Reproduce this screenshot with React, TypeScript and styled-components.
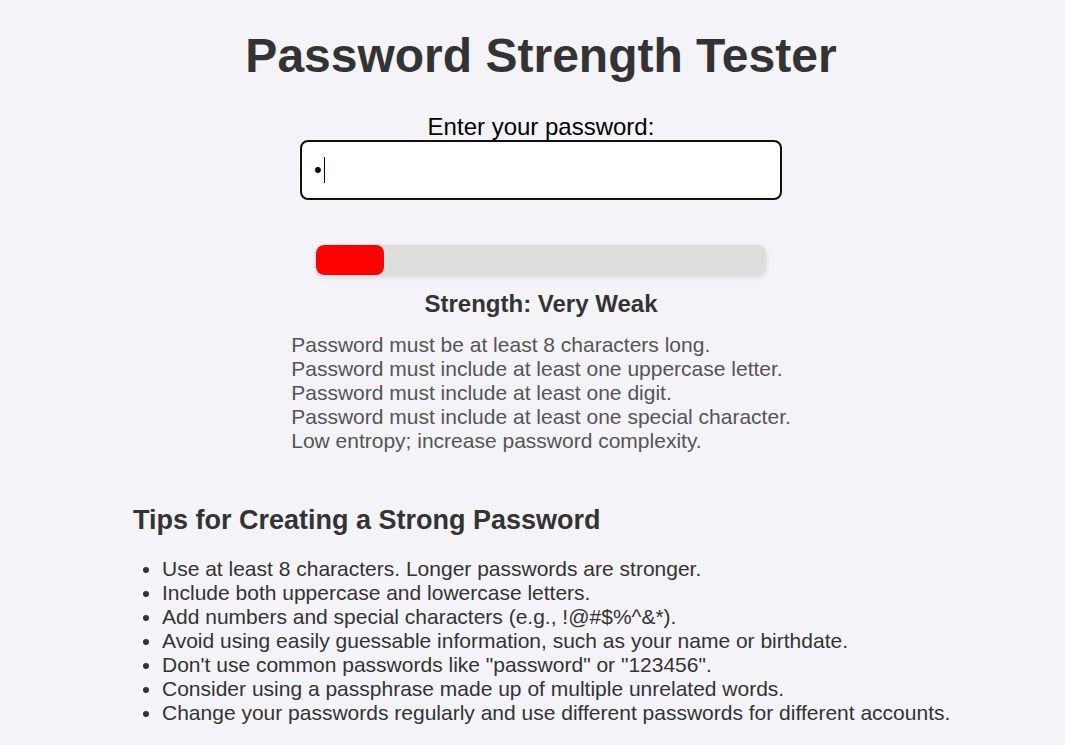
import styled, { createGlobalStyle } from 'styled-components';

const GlobalStyle = createGlobalStyle`
  html, body {
    margin: 0;
    background: #f4f4f8;
  }

  body {
    font-family: "Liberation Sans", Arial, sans-serif;
    color: #333;
    padding-left: 17px;
  }
`;

const feedback = [
  'Password must be at least 8 characters long.',
  'Password must include at least one uppercase letter.',
  'Password must include at least one digit.',
  'Password must include at least one special character.',
  'Low entropy; increase password complexity.',
];

const tips = [
  'Use at least 8 characters. Longer passwords are stronger.',
  'Include both uppercase and lowercase letters.',
  'Add numbers and special characters (e.g., !@#$%^&*).',
  'Avoid using easily guessable information, such as your name or birthdate.',
  'Don\'t use common passwords like "password" or "123456".',
  'Consider using a passphrase made up of multiple unrelated words.',
  'Change your passwords regularly and use different passwords for different accounts.',
];

export default function App() {
  const strength = 15;

  return (
    <>
      <GlobalStyle />
      <Container>
        <Title>Password Strength Tester</Title>

        <Label htmlFor="password">Enter your password:</Label>
        <Field>
          <Input id="password" type="password" defaultValue="a" />
          <Caret />
        </Field>

        <Meter>
          <MeterFill style={{ width: `${strength}%` }} />
        </Meter>
        <StrengthText>Strength: Very Weak</StrengthText>

        <Feedback>
          {feedback.map((line) => (
            <li key={line}>{line}</li>
          ))}
        </Feedback>

        <Tips>
          <TipsTitle>Tips for Creating a Strong Password</TipsTitle>
          <TipList>
            {tips.map((tip) => (
              <li key={tip}>{tip}</li>
            ))}
          </TipList>
        </Tips>
      </Container>
    </>
  );
}

const Container = styled.main`
  max-width: 816px;
  margin: 0 auto;
  display: flex;
  flex-direction: column;
  align-items: center;
  text-align: center;
`;

const Title = styled.h1`
  font-size: 48px;
  font-weight: bold;
  color: #333;
  margin: 28px 0 30px;
`;

const Label = styled.label`
  display: block;
  font-size: 24px;
  color: #000;
  margin-bottom: -1px;
`;

const Field = styled.div`
  position: relative;
`;

const Input = styled.input`
  box-sizing: border-box;
  display: block;
  width: 482px;
  height: 60px;
  padding: 0 12px;
  border: 2px solid #111;
  border-radius: 8px;
  background: #fff;
  font-size: 22px;
  font-family: "Liberation Sans", Arial, sans-serif;
  color: #000;
  outline: none;
`;

// text cursor drawn after the single masked character
const Caret = styled.span`
  position: absolute;
  left: 24px;
  top: 17px;
  width: 1px;
  height: 26px;
  background: #000;
`;

const Meter = styled.div`
  width: 450px;
  height: 30px;
  margin-top: 45px;
  background: #ddd;
  border-radius: 8px;
  box-shadow: 0 2px 5px rgba(0, 0, 0, 0.12);
  overflow: hidden;
`;

const MeterFill = styled.div`
  height: 100%;
  background: #ff0000;
  border-radius: 8px;
`;

const StrengthText = styled.p`
  font-size: 24px;
  font-weight: bold;
  color: #333;
  margin: 15px 0 0;
`;

const Feedback = styled.ul`
  list-style: none;
  margin: 15px 0 0;
  padding: 0;
  text-align: left;
  font-size: 21px;
  line-height: 24px;
  color: #555;
`;

const Tips = styled.section`
  align-self: stretch;
  text-align: left;
  margin-top: 52px;
`;

const TipsTitle = styled.h2`
  font-size: 27px;
  font-weight: bold;
  color: #333;
  margin: 0;
`;

const TipList = styled.ul`
  margin: 21px 0 0;
  padding-left: 29px;
  font-size: 21px;
  line-height: 24px;
  color: #333;

  li {
    white-space: nowrap;
  }
`;
